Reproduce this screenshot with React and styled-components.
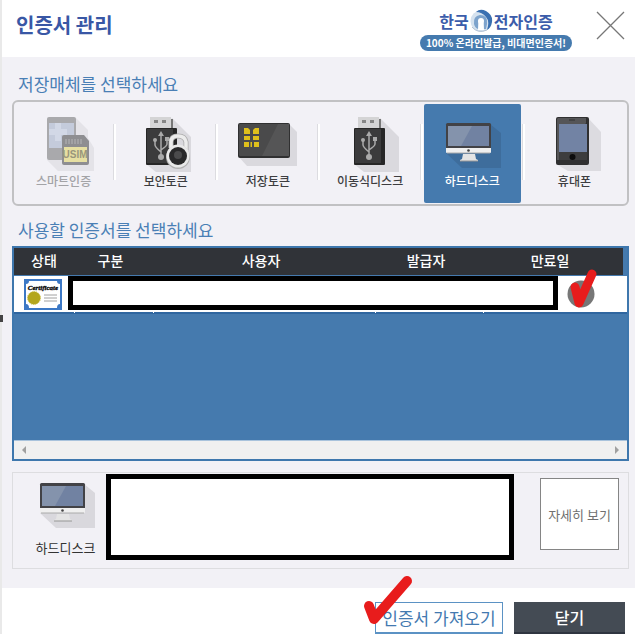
import React, { useState } from "react";
import styled, { createGlobalStyle, css } from "styled-components";

const blue = "#457aae";

const GlobalStyle = createGlobalStyle`
  * { box-sizing: border-box; }
  body { margin: 0; background: #fff; }
  body, button {
    font-family: "Noto Sans CJK KR", "Noto Sans", sans-serif;
  }
  button { margin: 0; padding: 0; border: 0; background: none; color: inherit; cursor: pointer; }
`;

const Dialog = styled.main`
  position: relative;
  display: flex;
  flex-direction: column;
  border-left: 2px solid #e9e9e9;
`;

const EdgeMark = styled.span`
  position: absolute;
  left: -2px;
  top: 315px;
  width: 3px;
  height: 7px;
  background: #444;
`;

const Header = styled.header`
  display: flex;
  align-items: flex-start;
  height: 57px;
  padding: 10px 10px 0 14px;
`;

const Title = styled.h1`
  flex: 1;
  margin: 0;
  font-size: 20px;
  line-height: 30px;
  font-weight: 700;
  color: #3957a5;
`;

const Brand = styled.div`
  display: flex;
  flex-direction: column;
  align-items: center;
  margin-right: 24px;
`;

const BrandName = styled.div`
  display: flex;
  align-items: center;
  gap: 1px;
  height: 22px;
  font-size: 16px;
  line-height: 20px;
  font-weight: 700;
  color: #3b5caa;
`;

const BrandBadge = styled.div`
  margin-top: 3px;
  padding: 0 6px;
  border-radius: 8px;
  background: ${blue};
  color: #fff;
  font-size: 10px;
  line-height: 16px;
  font-weight: 700;
  white-space: nowrap;
`;

const CloseIconButton = styled.button`
  display: block;
  width: 29px;
  height: 30px;
  svg { display: block; }
`;

const Body = styled.div`
  padding: 3px 6px 19px 10px;
  background: #f2f1f6;
`;

const SectionTitle = styled.h2`
  margin: 12px 0 4px;
  padding-left: 6px;
  font-size: 17px;
  line-height: 24px;
  font-weight: 400;
  color: #4a7fb5;
`;

const MediaBox = styled.div`
  display: grid;
  grid-template-columns: repeat(6, 1fr);
  padding: 2px 0 1px;
  border: 2px solid #c1c1c3;
  border-radius: 6px;
`;

const MediaCell = styled.div`
  position: relative;
  padding: 0 4px 0 1px;
  &:not(:last-child)::after {
    content: "";
    position: absolute;
    right: 0;
    top: 20px;
    width: 2px;
    height: 56px;
    border-left: 1px solid #dcdce0;
    background: #fff;
  }
`;

const MediaButton = styled.button`
  display: flex;
  flex-direction: column;
  align-items: center;
  width: 100%;
  height: 99px;
  padding-top: 12px;
  font-size: 12px;
  line-height: 17px;
  font-weight: 500;
  color: #3d3d40;
  ${(p) => p.$active && css`background: ${blue}; color: #fff; border-radius: 2px;`}
  ${(p) => p.disabled && css`color: #a3a3a6; cursor: default;`}
  svg { display: block; }
`;

const ListBox = styled.div`
  border: 2px solid #3e77ad;
  background: ${blue};
`;

const TableArea = styled.div`
  position: relative;
  height: 192px;
`;

const Table = styled.table`
  width: 100%;
  table-layout: fixed;
  border-collapse: separate;
  border-spacing: 0;
`;

const Col = styled.col`
  width: ${(p) => p.$w};
`;

const Th = styled.th`
  height: 28px;
  padding: 0 6px 3px 0;
  background: #303338;
  border-bottom: 1px solid ${blue};
  color: #fff;
  font-size: 14px;
  line-height: 20px;
  font-weight: 500;
  &:first-child { padding-right: 0; }
  &:last-child { border-right: 4px solid ${blue}; }
`;

const Td = styled.td`
  position: relative;
  height: 38px;
  padding: 0 0 0 10px;
  background: #fff;
  border-bottom: 2px solid #2f66a0;
  svg { display: block; }
  &:not(:first-child)::after {
    content: "";
    position: absolute;
    left: 0;
    bottom: -1px;
    width: 1px;
    height: 1px;
    background: #fff;
  }
`;

const RowCover = styled.div`
  position: absolute;
  left: 54px;
  right: 69px;
  top: 28px;
  height: 34px;
  border: 5px solid #000;
  background: #fff;
`;

const RowMark = styled.svg`
  position: absolute;
  right: 29px;
  top: 18px;
`;

const ScrollBar = styled.div`
  display: flex;
  align-items: center;
  justify-content: space-between;
  height: 19px;
  padding: 0 7px;
  border-top: 1px solid #a9c3dc;
  background: #f0f0f0;
`;

const ScrollButton = styled.button`
  width: 6px;
  height: 10px;
  svg { display: block; }
`;

const Detail = styled.section`
  display: flex;
  margin-top: 11px;
  padding: 1px 9px 8px 0;
  border: 1px solid #dddde0;
`;

const DetailMedia = styled.div`
  display: flex;
  flex-direction: column;
  align-items: center;
  width: 93px;
  padding: 2px 2px 0 14px;
  font-size: 13px;
  line-height: 20px;
  color: #333;
  white-space: nowrap;
  svg { display: block; margin-bottom: 6px; }
`;

const DetailInfo = styled.div`
  flex: 1;
  height: 86px;
  border: 5px solid #000;
  background: #fff;
`;

const DetailButton = styled.button`
  width: 79px;
  height: 72px;
  margin: 4px 0 0 26px;
  border: 1px solid #858585;
  background: #fff;
  color: #707070;
  font-size: 13px;
  white-space: nowrap;
`;

const Footer = styled.footer`
  display: flex;
  justify-content: flex-end;
  gap: 11px;
  padding: 14px 10px 0 0;
`;

const ImportWrap = styled.div`
  position: relative;
`;

const FooterButton = styled.button`
  display: block;
  width: ${(p) => (p.$primary ? "128px" : "111px")};
  height: 32px;
  font-size: ${(p) => (p.$primary ? "17px" : "16px")};
  line-height: 24px;
  font-weight: ${(p) => (p.$primary ? 400 : 500)};
  white-space: nowrap;
  ${(p) => p.$primary
    ? css`border: 1px solid #5b92c4; border-bottom-width: 2px; background: #fff; color: #4379b0;`
    : css`border-bottom: 2px solid #2f3540; background: #444b54; color: #fff;`}
`;

const ImportMark = styled.svg`
  position: absolute;
  left: -13px;
  top: -29px;
  pointer-events: none;
`;

const IconLabel = styled.text`
  font-family: "Liberation Sans", sans-serif;
  font-size: 10px;
  font-weight: 700;
  fill: #99967c;
`;

const ScriptLabel = styled.text`
  font-family: "Liberation Serif", serif;
  font-size: 7px;
  font-style: italic;
  font-weight: 700;
  fill: #000;
  stroke: #000;
  stroke-width: 0.3;
`;

const Icon = ({ children }) => (
  <svg width="60" height="56" viewBox="0 0 60 56" aria-hidden="true">
    {children}
  </svg>
);

const SmartIcon = () => (
  <Icon>
    <path d="M42 2 54 14V22L60 32V55H24L13 44Z" fill="#e4e3e8" />
    <rect x="13" y="1" width="29" height="43" rx="2" fill="#a9a9ac" />
    <rect x="15" y="7" width="25" height="25" fill="#c4cbdb" />
    <path d="M15 13h6V7h6v6h6v6h-6v6h-6v-6h-6z" fill="#d2d8e6" />
    <path d="M28 21q0-2 2-2H50l5 6V47q0 2-2 2H30q-2 0-2-2Z" fill="#8e8e91" />
    <path d="M32 23v5m3-5v5m3-5v5m3-5v5m3-5v5m3-5v5" stroke="#b5b5b7" />
    <rect x="30" y="31" width="23" height="15" fill="#e6dfa2" />
    <IconLabel x="41" y="42" textAnchor="middle">USIM</IconLabel>
  </Icon>
);

const UsbDrawing = () => (
  <>
    <path d="M36 2 55 21V56H20L10 48Z" fill="#dad9de" />
    <path d="M35 3h2v10h-2z" fill="#777" />
    <rect x="14" y="1" width="21" height="12" fill="#d4d4d5" />
    <path d="M18 4h4v3h-4zM26 4h4v3h-4z" fill="#858585" />
    <rect x="10" y="12" width="31" height="37" rx="1" fill="#262626" />
    <path d="M11 13h26v34H11z" fill="#3b3b3c" />
    <path d="M25 18v22M19 24v5q0 2 6 7M31 23v5q0 2-6 6" fill="none" stroke="#aaa" strokeWidth="1.5" />
    <path d="m22 20 3-5 3 5z" fill="#aaa" />
    <circle cx="25" cy="41" r="3" fill="#aaa" />
    <circle cx="19" cy="24" r="2" fill="#aaa" />
    <path d="M29 21h4v4h-4z" fill="#aaa" />
  </>
);

const TokenIcon = () => (
  <Icon>
    <UsbDrawing />
    <path d="M35 32v-6q0-6 7-6t8 6v8" fill="none" stroke="#aaa" strokeWidth="5" />
    <path d="M35 32v-6q0-6 7-6t8 6v8" fill="none" stroke="#ececec" strokeWidth="3.5" />
    <circle cx="42" cy="41" r="12" fill="#b0b0b0" />
    <circle cx="42" cy="40" r="11.5" fill="#e9e9e9" />
    <circle cx="42" cy="40" r="9" fill="#29292a" />
    <circle cx="42" cy="39" r="4" fill="#4b4b4c" />
  </Icon>
);

const UsbIcon = () => (
  <Icon><g transform="translate(4 0)"><UsbDrawing /></g></Icon>
);

const CardIcon = () => (
  <Icon>
    <path d="m50 7 9 9v34H9L0 40Z" fill="#dad9de" />
    <rect x="0" y="7" width="52" height="35" rx="2" fill="#303031" />
    <rect x="1" y="8" width="50" height="32" rx="1" fill="#4a4a4b" />
    <path d="M40 8h11v32H24z" fill="#555556" />
    <path d="M6 12h4l2 2v4H6zM15 14l2-2h4v6h-6zM6 20h6v4H6zM15 20h6v4h-6zM6 26h5v5H6zM12.500 26h1.500v5h-1.500zM16 26h5v5h-5z" fill="#dfc01c" />
  </Icon>
);

const DesktopIcon = ({ shadow = "#d9d8dd" }) => (
  <Icon>
    <path d="M48 8 59 17V52H20L4 37Z" fill={shadow} />
    <rect x="4" y="7" width="45" height="27" rx="1.500" fill="#424246" />
    <rect x="6" y="10" width="41" height="20" fill="#7182a2" />
    <path d="M6 10h24L19 30H6z" fill="#8493ac" />
    <path d="M4 32h45v4q0 1-1 1H5q-1 0-1-1z" fill="#efefef" />
    <path d="M5 37h43" stroke="#aaa" />
    <circle cx="26.500" cy="34.500" r="1.300" fill="#444" />
    <path d="M21 38h12l1 5 2 1v1H18v-1l2-1z" fill="#e4e4e4" />
    <path d="M18 45h18" stroke="#969696" />
  </Icon>
);

const PhoneIcon = () => (
  <Icon>
    <path d="M44 2 57 16V55H24L12 48Z" fill="#dcdbe0" />
    <rect x="12" y="1" width="33" height="48" rx="2" fill="#303031" />
    <path d="M14 2h28v5L15 44h-2V3z" fill="#555557" />
    <path d="M25 4h6" stroke="#333" />
    <rect x="15" y="8" width="28" height="28" fill="#7283a4" />
    <path d="M15 36h28v8H15z" fill="#3d3d3e" />
    <circle cx="28.500" cy="41" r="3" fill="#0d0d0d" />
  </Icon>
);

const CertificateIcon = () => (
  <svg width="38" height="31" viewBox="0 0 38 31" role="img" aria-label="인증서">
    <rect width="38" height="31" fill="#3c78c5" />
    <path d="M5 2h28q0 3 3 3v20q-3 0-3 4H5q0-4-3-4V5q3 0 3-3" fill="#fff" />
    <ScriptLabel x="19" y="11" textAnchor="middle">Certificate</ScriptLabel>
    <path d="M20 16h13M20 19h13M20 22h13" stroke="#a0a0a0" />
    <circle cx="10" cy="19" r="6.500" fill="#b3a61d" />
    <circle cx="10" cy="19" r="6.500" fill="none" stroke="#cdc350" strokeDasharray="1 1" />
  </svg>
);

const BrandSymbol = () => (
  <svg width="23" height="24" viewBox="0 0 23 24" aria-hidden="true">
    <circle cx="11" cy="12" r="10.500" fill="#d5e2ef" />
    <path d="M6 3Q10-1 16 2q7 4 6 11-1 6-5 8 3-9-1-13-4-5-10-5" fill="#3a70b1" />
    <path d="M4 15q-1-8 6-9 8 0 7 9l-1 5h-2v-6q-1-3-3-3-3 0-3 3v6q-3-1-4-5" fill="#7da3cc" />
    <circle cx="11" cy="12" r="3" fill="#fff" />
    <path d="M9 13h4l1 8H8z" fill="#fff" />
    <path d="M2 18q6 7 15 3" fill="none" stroke="#aebfd2" />
  </svg>
);

const media = [
  { name: "스마트인증", icon: SmartIcon, disabled: true },
  { name: "보안토큰", icon: TokenIcon },
  { name: "저장토큰", icon: CardIcon },
  { name: "이동식디스크", icon: UsbIcon },
  { name: "하드디스크", icon: DesktopIcon },
  { name: "휴대폰", icon: PhoneIcon },
];

const columns = [
  { name: "상태", width: "60px" },
  { name: "구분", width: "79px" },
  { name: "사용자", width: "auto" },
  { name: "발급자", width: "108px" },
  { name: "만료일", width: "144px" },
];

export default function App() {
  const [selected, setSelected] = useState("하드디스크");
  return (
    <Dialog>
      <GlobalStyle />
      <EdgeMark />
      <Header>
        <Title>인증서 관리</Title>
        <Brand>
          <BrandName>
            <span>한국</span>
            <BrandSymbol />
            <span>전자인증</span>
          </BrandName>
          <BrandBadge>100% 온라인발급, 비대면인증서!</BrandBadge>
        </Brand>
        <CloseIconButton aria-label="창 닫기">
          <svg width="29" height="30" viewBox="0 0 29 30">
            <path d="M1 2 28 29M28 2 1 29" stroke="#777" strokeWidth="1.300" />
          </svg>
        </CloseIconButton>
      </Header>

      <Body>
        <SectionTitle>저장매체를 선택하세요</SectionTitle>
        <MediaBox>
          {media.map(({ name, icon: MediaIcon, disabled }) => {
            const active = selected === name;
            return (
              <MediaCell key={name}>
                <MediaButton
                  $active={active}
                  aria-pressed={active}
                  disabled={disabled}
                  onClick={() => setSelected(name)}
                >
                  <MediaIcon {...(active ? { shadow: "#3e6d9c" } : {})} />
                  <span>{name}</span>
                </MediaButton>
              </MediaCell>
            );
          })}
        </MediaBox>

        <SectionTitle>사용할 인증서를 선택하세요</SectionTitle>
        <ListBox>
          <TableArea>
            <Table>
              <colgroup>
                {columns.map((c) => <Col key={c.name} $w={c.width} />)}
              </colgroup>
              <thead>
                <tr>{columns.map((c) => <Th key={c.name} scope="col">{c.name}</Th>)}</tr>
              </thead>
              <tbody>
                <tr>
                  <Td><CertificateIcon /></Td>
                  <Td /><Td /><Td /><Td />
                </tr>
              </tbody>
            </Table>
            <RowCover />
            <RowMark width="36" height="46" viewBox="0 0 36 46" aria-hidden="true">
              <circle cx="19" cy="28" r="13.500" fill="#777" />
              <path d="M13 21 17 37 30 8" fill="none" stroke="#e81c1c" strokeWidth="9" strokeLinecap="round" strokeLinejoin="round" />
            </RowMark>
          </TableArea>
          <ScrollBar>
            <ScrollButton aria-label="왼쪽으로">
              <svg width="6" height="10" viewBox="0 0 6 10"><path d="M5 1v8L1 5z" fill="#a0a0a0" /></svg>
            </ScrollButton>
            <ScrollButton aria-label="오른쪽으로">
              <svg width="6" height="10" viewBox="0 0 6 10"><path d="M1 1v8l4-4z" fill="#a0a0a0" /></svg>
            </ScrollButton>
          </ScrollBar>
        </ListBox>

        <Detail>
          <DetailMedia>
            <DesktopIcon />
            <span>하드디스크</span>
          </DetailMedia>
          <DetailInfo />
          <DetailButton>자세히 보기</DetailButton>
        </Detail>
      </Body>

      <Footer>
        <ImportWrap>
          <FooterButton $primary>인증서 가져오기</FooterButton>
          <ImportMark width="54" height="54" viewBox="0 0 54 54" aria-hidden="true">
            <path d="M7 33 12 46 45 8" fill="none" stroke="#e81c1c" strokeWidth="10" strokeLinecap="round" strokeLinejoin="round" />
          </ImportMark>
        </ImportWrap>
        <FooterButton>닫기</FooterButton>
      </Footer>
    </Dialog>
  );
}
